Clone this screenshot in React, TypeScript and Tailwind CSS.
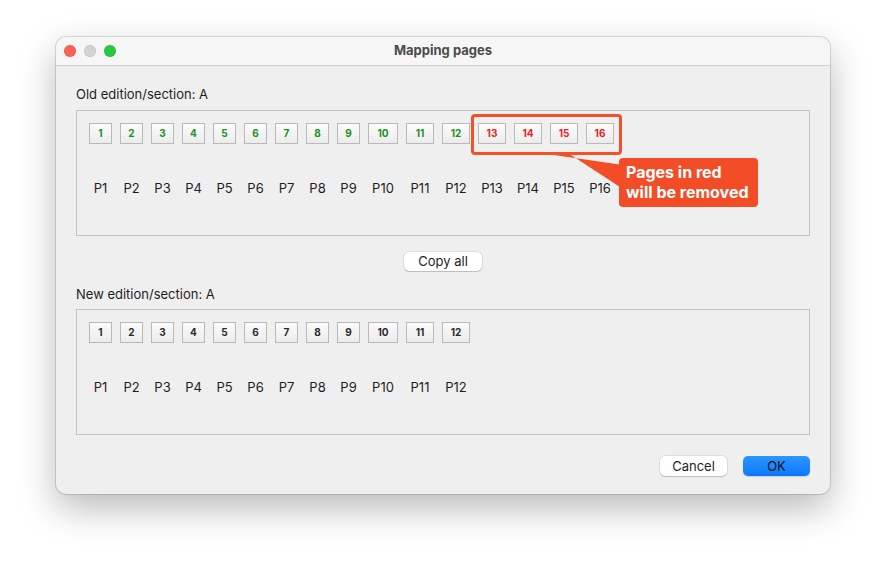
import React from "react";

const pages = Array.from({ length: 16 }, (_, i) => i + 1);

function widthFor(n: number) {
  if (n < 10) return "w-[23px]";
  if (n === 10) return "w-[30px]";
  return "w-[28px]";
}

function PageColumn({ n, tone }: { n: number; tone: "green" | "red" | "plain" }) {
  const color =
    tone === "green" ? "text-[#1d8f1d]" : tone === "red" ? "text-[#ea1b22]" : "text-[#2a2a2a]";
  return (
    <div className="flex flex-col items-center">
      <div
        className={`${widthFor(n)} flex h-[21px] items-center justify-center border border-[#b9b9b9] bg-gradient-to-b from-[#fbfbfb] to-[#ececec] text-[10px] font-bold ${color}`}
      >
        {n}
      </div>
      <div className="mt-[36px] whitespace-nowrap text-[13px] leading-[16px] text-[#1e1e1e]">P{n}</div>
    </div>
  );
}

function PageBox({ count, old }: { count: number; old?: boolean }) {
  return (
    <div className="relative h-[126px] border border-[#c3c3c3] px-[12px] pt-[12px]">
      <div className="flex gap-[8px]">
        {pages.slice(0, count).map((n) => (
          <PageColumn key={n} n={n} tone={old ? (n > 12 ? "red" : "green") : "plain"} />
        ))}
      </div>
      {old && (
        <>
          <div className="absolute left-[394px] top-[3px] h-[41px] w-[151px] rounded-[4px] border-[3px] border-[#f4502a]" />
          <svg className="absolute left-[470px] top-[40px]" width="80" height="45" viewBox="0 0 80 45">
            <polygon points="7,4 24,4 76,38 76,14" fill="#f24d27" />
          </svg>
          <div className="absolute left-[542px] top-[47px] w-[139px] rounded-[4px] bg-[#f24d27] px-[7px] pb-[5px] pt-[4px] text-[16px] font-bold leading-[20px] text-white">
            Pages in red
            <br />
            will be removed
          </div>
        </>
      )}
    </div>
  );
}

export default function App() {
  return (
    <div
      className="h-[569px] w-[886px] bg-white pl-[56px] pt-[37px]"
      style={{ fontFamily: "Inter, 'Liberation Sans', sans-serif" }}
    >
      <div className="h-[457px] w-[774px] overflow-hidden rounded-[10px] bg-[#efefef] shadow-[0_0_0_1px_rgba(0,0,0,0.13),0_14px_36px_rgba(0,0,0,0.28)]">
        <div className="relative flex h-[29px] items-center justify-center border-b border-[#d3d3d3] bg-[#f6f6f6]">
          <div className="absolute left-[8px] top-[8px] flex gap-[8px]">
            <span className="h-[12px] w-[12px] rounded-full bg-[#fe5f57] shadow-[inset_0_0_0_0.5px_rgba(0,0,0,0.12)]" />
            <span className="h-[12px] w-[12px] rounded-full bg-[#d3d3d3] shadow-[inset_0_0_0_0.5px_rgba(0,0,0,0.12)]" />
            <span className="h-[12px] w-[12px] rounded-full bg-[#29c840] shadow-[inset_0_0_0_0.5px_rgba(0,0,0,0.12)]" />
          </div>
          <span className="text-[13px] font-bold text-[#4b4b4b]">Mapping pages</span>
        </div>

        <div className="px-[20px] pt-[20px]">
          <div className="text-[13px] leading-[16px] text-[#1e1e1e]">Old edition/section: A</div>
          <div className="mt-[8px]">
            <PageBox count={16} old />
          </div>

          <div className="mt-[16px] flex justify-center">
            <button className="h-[19px] w-[78px] rounded-[5px] bg-white text-[13px] leading-[19px] text-[#1e1e1e] shadow-[0_0_0_0.5px_rgba(0,0,0,0.15),0_1px_1px_rgba(0,0,0,0.15)]">
              Copy all
            </button>
          </div>

          <div className="mt-[15px] text-[13px] leading-[16px] text-[#1e1e1e]">New edition/section: A</div>
          <div className="mt-[7px]">
            <PageBox count={12} />
          </div>

          <div className="mt-[21px] flex justify-end gap-[16px]">
            <button className="h-[20px] w-[67px] rounded-[5px] bg-white text-[13px] leading-[20px] text-[#1e1e1e] shadow-[0_0_0_0.5px_rgba(0,0,0,0.15),0_1px_1px_rgba(0,0,0,0.15)]">
              Cancel
            </button>
            <button className="h-[20px] w-[67px] rounded-[5px] bg-gradient-to-b from-[#2b95ff] to-[#0a78fe] text-[13px] leading-[20px] text-[#111] shadow-[0_1px_1px_rgba(0,0,0,0.15)]">
              OK
            </button>
          </div>
        </div>
      </div>
    </div>
  );
}
